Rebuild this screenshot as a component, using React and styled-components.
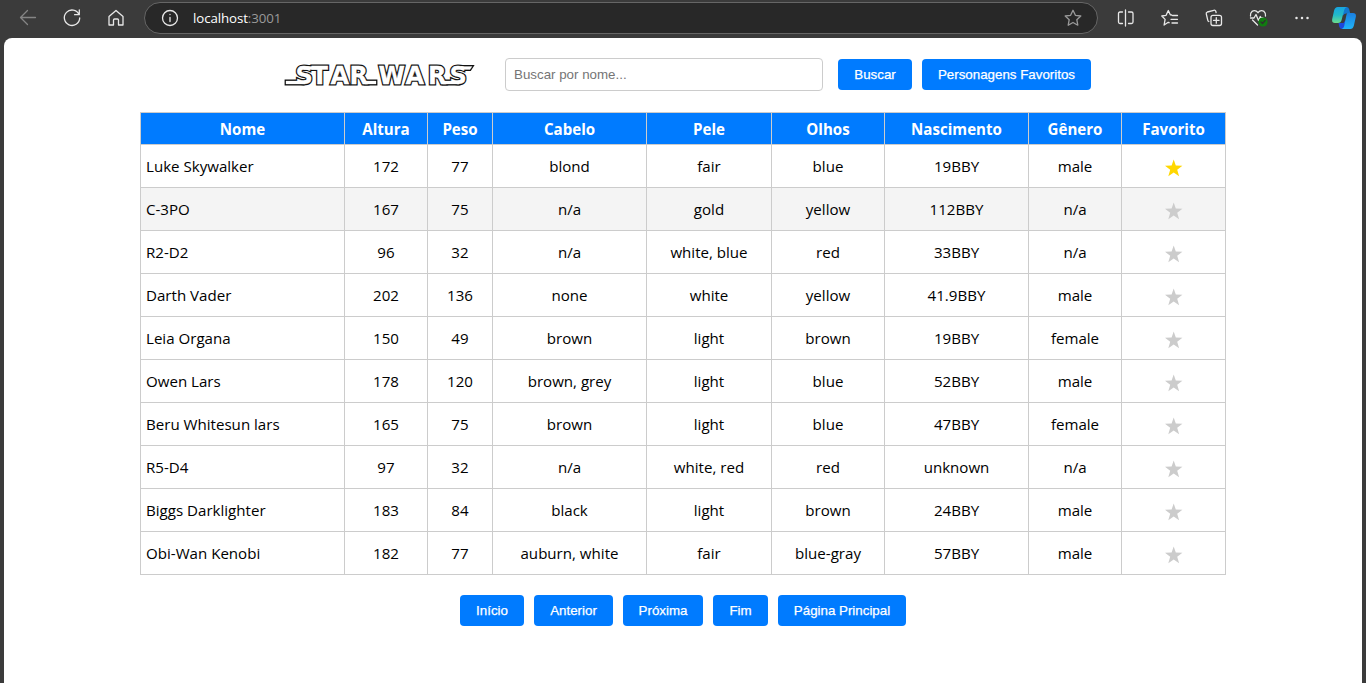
import React from 'react';
import styled, { createGlobalStyle } from 'styled-components';

const GlobalStyle = createGlobalStyle`
  * { box-sizing: border-box; }
  html, body { margin: 0; padding: 0; }
  body { background: #3b3b3b; overflow: hidden; }
`;

const Window = styled.div`
  display: flex;
  flex-direction: column;
  height: 683px;
  width: 1366px;
  background: #3b3b3b;
`;

const Toolbar = styled.div`
  display: flex;
  align-items: center;
  flex: none;
  height: 38px;
  padding: 0 8px 2px 16px;
`;

const NavIcons = styled.div`
  display: flex;
  gap: 20px;
  margin-right: 16px;
`;

const ToolIcons = styled.div`
  display: flex;
  gap: 20px;
  margin-left: 16px;
`;

const Icon = styled.svg`
  display: block;
  width: 24px;
  height: 24px;
  fill: none;
  stroke: ${(p) => p.$color || '#e8e8e8'};
  stroke-width: 1.3;
  stroke-linecap: round;
  stroke-linejoin: round;
`;

const BrandIcon = styled(Icon)`
  margin-left: -2px;
  stroke: none;
`;

const AddressBar = styled.div`
  display: flex;
  align-items: center;
  width: 954px;
  height: 32px;
  padding: 0 12px 0 13px;
  border: 1px solid #666;
  border-radius: 16px;
  background: #282828;
`;

const Address = styled.div`
  flex: 1;
  margin-left: 11px;
  font: 13.3px/20px "Open Sans", "Noto Sans", sans-serif;
  letter-spacing: -0.1px;
  color: #fff;
`;

const Port = styled.span`
  color: #9a9a9a;
`;

const Page = styled.main`
  display: flex;
  flex-direction: column;
  align-items: center;
  flex: 1;
  margin: 0 4px;
  padding-top: 20px;
  border-radius: 8px 8px 0 0;
  background: #fff;
`;

const Header = styled.header`
  display: flex;
  align-items: center;
  height: 33px;
  margin: 0 0 21px 4px;
`;

const Logo = styled.svg`
  display: block;
  width: 200px;
  height: 30px;
  margin-right: 26px;
  font: bold 24px "DejaVu Sans", sans-serif;
  stroke-linejoin: miter;
`;

const SearchInput = styled.input`
  width: 318px;
  height: 33px;
  margin-right: 15px;
  padding: 0 8px;
  border: 1px solid #ccc;
  border-radius: 4px;
  font: 13.33px "Liberation Sans", Arial, sans-serif;
  &::placeholder { color: #757575; }
`;

const Button = styled.button`
  width: ${(p) => p.$width}px;
  height: 31px;
  padding: 0;
  border: 0;
  border-radius: 4px;
  background: #007bff;
  color: #fff;
  font: 13.33px "Liberation Sans", Arial, sans-serif;
  -webkit-text-stroke: 0.25px #fff;
  white-space: nowrap;
`;

const ButtonRow = styled.div`
  display: flex;
  gap: 10px;
`;

const Table = styled.table`
  width: 1086px;
  table-layout: fixed;
  border-collapse: collapse;
  font: 15.1px/22px "Open Sans", "Noto Sans", sans-serif;
  color: #000;
`;

const Col = styled.col`
  width: ${(p) => p.$width}px;
`;

const Th = styled.th`
  height: 32px;
  padding: 2px 0 1px;
  border: 1px solid #ccc;
  background: #007bff;
  color: #fff;
  font-weight: 700;
  text-align: center;
`;

const Tr = styled.tr`
  background: ${(p) => (p.$hovered ? '#f4f4f4' : '#fff')};
`;

const Td = styled.td`
  height: 43px;
  padding: 0 5px;
  border: 1px solid #ccc;
  text-align: ${(p) => p.$align || 'center'};
  white-space: nowrap;
`;

const Star = styled.svg`
  display: block;
  width: 18px;
  height: 18px;
  margin: 3px auto 0;
  fill: ${(p) => (p.$active ? '#ffd700' : '#ccc')};
`;

const Pagination = styled.nav`
  display: flex;
  gap: 10px;
  margin-top: 20px;
`;

const columns = [
  ['Nome', 204], ['Altura', 83], ['Peso', 65], ['Cabelo', 154], ['Pele', 125],
  ['Olhos', 113], ['Nascimento', 144], ['Gênero', 93], ['Favorito', 104],
];

const people = [
  ['Luke Skywalker', '172', '77', 'blond', 'fair', 'blue', '19BBY', 'male'],
  ['C-3PO', '167', '75', 'n/a', 'gold', 'yellow', '112BBY', 'n/a'],
  ['R2-D2', '96', '32', 'n/a', 'white, blue', 'red', '33BBY', 'n/a'],
  ['Darth Vader', '202', '136', 'none', 'white', 'yellow', '41.9BBY', 'male'],
  ['Leia Organa', '150', '49', 'brown', 'light', 'brown', '19BBY', 'female'],
  ['Owen Lars', '178', '120', 'brown, grey', 'light', 'blue', '52BBY', 'male'],
  ['Beru Whitesun lars', '165', '75', 'brown', 'light', 'blue', '47BBY', 'female'],
  ['R5-D4', '97', '32', 'n/a', 'white, red', 'red', 'unknown', 'n/a'],
  ['Biggs Darklighter', '183', '84', 'black', 'light', 'brown', '24BBY', 'male'],
  ['Obi-Wan Kenobi', '182', '77', 'auburn, white', 'fair', 'blue-gray', '57BBY', 'male'],
];

const pages = [['Início', 64], ['Anterior', 79], ['Próxima', 80], ['Fim', 55], ['Página Principal', 128]];

const STAR_PATH = 'M8.700 .4 L10.800 6.500 L17.400 6.700 L12.200 10.700 L14.100 17.200 L8.700 13.400 L3.300 17.200 L5.200 10.700 L0 6.700 L6.600 6.500 Z';

function Wordmark() {
  const letters = (
    <>
      <text y="23.6" x="16.5 32.5 51.5 70.5">STAR</text>
      <text y="23.6" x="99.5 126.500 149 170.500">WARS</text>
      <path d="M7 21h17v3h-17z M25 6.500h14v3h-14z M86 21h11v3h-11z M182 6.500h11l-2 3h-9z M164 21h16v3h-16z" />
    </>
  );
  return (
    <Logo viewBox="0 0 200 30" aria-label="Star Wars">
      <g fill="#111" stroke="#111" strokeWidth="2.8">{letters}</g>
      <g fill="#fff" stroke="#fff" strokeWidth="0.3" aria-hidden="true">{letters}</g>
    </Logo>
  );
}

function CopilotLogo() {
  return (
    <BrandIcon viewBox="0 0 24 24">
      <defs>
        <linearGradient id="cpLeft" x1="0" y1="0" x2="0" y2="1">
          <stop offset="0" stopColor="#18a4e0" />
          <stop offset=".5" stopColor="#22b9c9" />
          <stop offset="1" stopColor="#6bdc8c" />
        </linearGradient>
        <linearGradient id="cpRight" x1="0" y1="0" x2="0" y2="1">
          <stop offset="0" stopColor="#1b7fe0" />
          <stop offset="1" stopColor="#20b4f8" />
        </linearGradient>
      </defs>
      <path fill="#1277cf" d="M8 1h6.500q2 0 2.600 2l1.200 4.500h-4q-2.500 0-3 2z" />
      <path fill="#1c48dc" d="M6.500 17h5l2-3 1 4-1.500 5H10q-2 0-2.600-2z" />
      <path fill="url(#cpLeft)" d="M5.800 1h9q-2 .5-2.600 3L9.600 14q-.7 3-3.600 3H2.800Q-.5 17 .2 13l1.900-8.500Q3 1 5.800 1z" />
      <path fill="url(#cpRight)" d="M15.500 7h5.500q3.600 0 2.800 4l-1.900 8.500q-.9 3.500-3.700 3.500H9.600q2-.5 2.600-3l2-10q.4-2.600 1.300-3z" />
    </BrandIcon>
  );
}

export default function App() {
  return (
    <Window>
      <GlobalStyle />
      <Toolbar>
        <NavIcons>
          <Icon viewBox="0 0 24 24" $color="#858585"><path d="M19.500 11.500H4.500M11.500 4.500L4.500 11.500l7 7" /></Icon>
          <Icon viewBox="0 0 24 24"><path d="M19 8.500A7.700 7.700 0 1 0 19.700 12M19.300 4v4.700h-4.700" /></Icon>
          <Icon viewBox="0 0 24 24"><path d="M5 10.500L12 4.500l7 6V19h-4.500v-5q0-1-1-1h-3q-1 0-1 1v5H5z" /></Icon>
        </NavIcons>
        <AddressBar>
          <Icon viewBox="0 0 24 24"><circle cx="12" cy="12" r="7.500" /><path d="M12 11.500v4M12 8.500v.1" /></Icon>
          <Address>localhost<Port>:3001</Port></Address>
          <Icon viewBox="0 0 24 24" $color="#9a9a9a"><path d="M12 4.300l2.400 5 5.400.7-4 3.700 1 5.500-4.800-2.700-4.800 2.700 1-5.500-4-3.700 5.400-.7z" /></Icon>
        </AddressBar>
        <ToolIcons>
          <Icon viewBox="0 0 24 24"><path d="M11.500 4v16M8.500 6H6Q4.500 6 4.500 7.500v8.500q0 1.500 1.500 1.500h2.500M14.500 6H17.500q1.500 0 1.500 1.500v8.500q0 1.500-1.500 1.500h-3" /></Icon>
          <Icon viewBox="0 0 24 24"><path d="M13.500 9l-1.200-.2-2-4.300-2.200 4.800-4.300.7 3.300 3.400-1 5.600 4.200-2.700.8.400M14.500 9.500h5M13 13.300h6.500M14 17h5.500" /></Icon>
          <Icon viewBox="0 0 24 24"><rect x="9" y="9.300" width="10.500" height="10.200" rx="2" /><path d="M14.300 11.700v5.500M11.500 14.400H17M6.800 15.500q-.8-.3-1-1.200L4.300 8q-.4-1.500 1-2l6.500-1.700q1.500-.4 2 1l.3 1.200" /></Icon>
          <Icon viewBox="0 0 24 24">
            <path d="M4.500 10q-.5-3 1.500-4.600Q9.500 3.500 12 6.700q2.500-3.200 6-1.300 2 1.600 1.500 4.600M6.500 14l5 5M4.500 12H8l2-3.500 2.500 6 1.800-4 1 1.500H17" />
            <circle cx="17" cy="16" r="4.600" fill="#107c10" stroke="none" />
            <path stroke="#303030" d="M15 16l1.500 1.500 2.700-3" />
          </Icon>
          <Icon viewBox="0 0 24 24"><path strokeWidth="2.500" d="M6.500 12h.01M12 12h.01M17.500 12h.01" /></Icon>
          <CopilotLogo />
        </ToolIcons>
      </Toolbar>
      <Page>
        <Header>
          <Wordmark />
          <SearchInput placeholder="Buscar por nome..." />
          <ButtonRow>
            <Button $width={74}>Buscar</Button>
            <Button $width={169}>Personagens Favoritos</Button>
          </ButtonRow>
        </Header>
        <Table>
          <colgroup>{columns.map(([name, width]) => <Col key={name} $width={width} />)}</colgroup>
          <thead>
            <tr>{columns.map(([name]) => <Th key={name}>{name}</Th>)}</tr>
          </thead>
          <tbody>
            {people.map((person, row) => (
              <Tr key={person[0]} $hovered={row === 1}>
                {person.map((value, i) => <Td key={i} $align={i === 0 ? 'left' : 'center'}>{value}</Td>)}
                <Td><Star viewBox="0 0 18 18" $active={row === 0}><path d={STAR_PATH} /></Star></Td>
              </Tr>
            ))}
          </tbody>
        </Table>
        <Pagination>
          {pages.map(([label, width]) => <Button key={label} $width={width}>{label}</Button>)}
        </Pagination>
      </Page>
    </Window>
  );
}
